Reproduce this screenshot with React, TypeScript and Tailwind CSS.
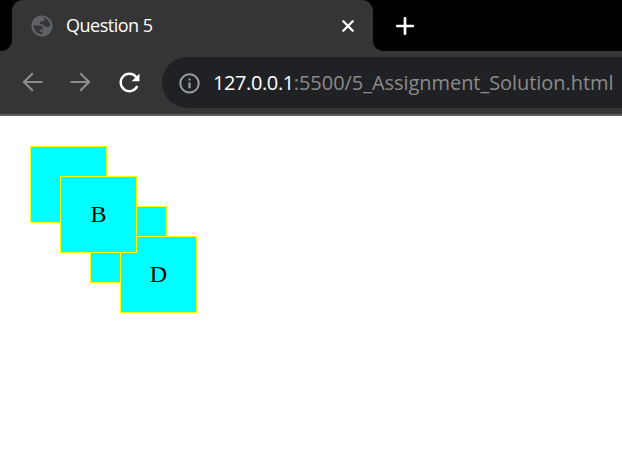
import React from "react";

function GlobeIcon() {
  return (
    <svg width="22" height="22" viewBox="0 0 22 22" className="shrink-0">
      <circle cx="11" cy="11" r="10.6" fill="#5f6368" />
      <path
        d="M11.6 2.6C13 3 14 4 13.6 5.3C13.1 6.6 9.4 6 8.8 7.8C8.5 9.6 12.6 9 13.2 10.6C13.5 12 15.4 12.6 17 12.2L19.3 11.2C19.2 6.6 16 3 11.6 2.6Z"
        fill="#353535"
      />
      <path
        d="M2.6 10.6L8.6 10.6C11 10.8 12.4 12.2 12 14.4L8.8 14.6V16.4L11.6 17.4V19.3C6.4 19.6 2.6 15.4 2.6 10.6Z"
        fill="#353535"
      />
    </svg>
  );
}

function ArrowIcon({ flip = false }: { flip?: boolean }) {
  return (
    <svg width="22" height="20" viewBox="0 0 22 20" fill="none" stroke="#8c8c8c" strokeWidth="2.2" className={flip ? "-scale-x-100" : ""}>
      <path d="M21.4 10H3.4M11.8 1.2L3 10L11.8 18.8" />
    </svg>
  );
}

function ReloadIcon() {
  return (
    <svg width="22" height="22" viewBox="0 0 22 22" fill="none">
      <path d="M18.3 5.2A8.7 8.7 0 1 0 19.3 14" stroke="#fff" strokeWidth="2.4" />
      <path d="M21.5 1.4V9.3H13.6Z" fill="#fff" />
    </svg>
  );
}

function InfoIcon() {
  return (
    <svg width="22" height="22" viewBox="0 0 22 22" fill="none" className="shrink-0">
      <circle cx="10.5" cy="11.4" r="9.2" stroke="#9aa0a6" strokeWidth="2" />
      <path d="M10.5 10.4V16.2M10.5 6.4V8.6" stroke="#9aa0a6" strokeWidth="2.2" />
    </svg>
  );
}

function TabStrip() {
  return (
    <div className="flex h-[51px] bg-black">
      <div className="w-3 bg-[#353535]">
        <div className="h-full w-full rounded-br-[11px] bg-black" />
      </div>
      <div className="flex h-full w-[361px] items-center rounded-t-[11px] bg-[#353535] pr-[19px] pl-[19px]">
        <GlobeIcon />
        <span className="ml-[13px] flex-1 font-['Open_Sans','Noto_Sans',sans-serif] text-[18px] tracking-[-0.5px] whitespace-nowrap text-white">
          Question 5
        </span>
        <svg width="12" height="12" viewBox="0 0 12 12" stroke="#fff" strokeWidth="2.3" strokeLinecap="round">
          <path d="M1.3 1.3L10.7 10.7M10.7 1.3L1.3 10.7" />
        </svg>
      </div>
      <div className="flex flex-1 flex-col bg-[#353535]">
        <div className="flex flex-1 items-center rounded-bl-[10px] bg-black pl-[23px]">
          <svg width="18" height="18" viewBox="0 0 18 18" stroke="#fff" strokeWidth="2.7" strokeLinecap="round">
            <path d="M9 1.3V16.7M1.3 9H16.7" />
          </svg>
        </div>
      </div>
    </div>
  );
}

function Toolbar() {
  return (
    <div className="flex h-[65px] items-center border-b-2 border-[#5f5f5f] bg-[#353535] pl-[21px]">
      <div className="-mt-px">
        <ArrowIcon />
      </div>
      <div className="-mt-px ml-[27px]">
        <ArrowIcon flip />
      </div>
      <div className="ml-[26px]">
        <ReloadIcon />
      </div>
      <div className="ml-[22px] flex h-[51px] flex-1 items-center rounded-l-full bg-[#202124] pl-[17px]">
        <InfoIcon />
        <span className="ml-[12px] font-['Open_Sans','Noto_Sans',sans-serif] text-[20px] tracking-[-0.05px] whitespace-nowrap text-[#8b8b8b]">
          <span className="tracking-[-0.4px] text-white">127.0.0.1</span>:5500/5_Assignment_Solution.html
        </span>
      </div>
    </div>
  );
}

const boxes = [
  { id: "a", label: "", place: "top-[30px] left-[30px]" },
  { id: "b", label: "B", place: "top-[60px] left-[60px] z-10" },
  { id: "c", label: "", place: "top-[90px] left-[90px]" },
  { id: "d", label: "D", place: "top-[120px] left-[120px]" },
];

export default function App() {
  return (
    <div className="flex h-[469px] w-[622px] flex-col overflow-hidden bg-white">
      <TabStrip />
      <Toolbar />
      <main className="relative flex-1">
        {boxes.map((box) => (
          <div
            key={box.id}
            className={`absolute flex size-[77px] items-center justify-center border border-[#ffff00] bg-[#00ffff] pb-[2px] font-['Liberation_Serif',serif] text-[24px] text-black ${box.place}`}
          >
            {box.label}
          </div>
        ))}
      </main>
    </div>
  );
}
